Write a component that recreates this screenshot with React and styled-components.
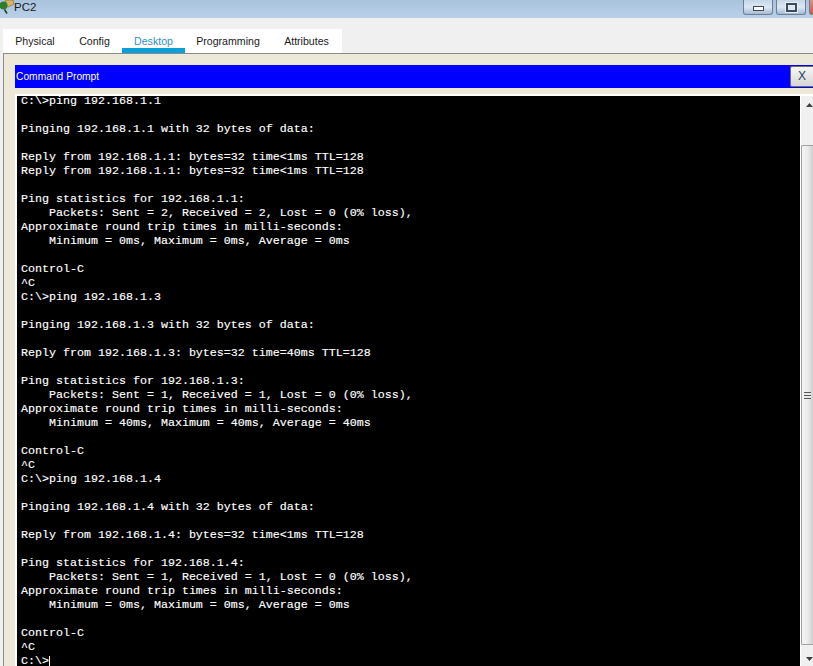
import React from 'react';
import styled, { createGlobalStyle } from 'styled-components';

const LINES = [
  'C:\\>ping 192.168.1.1',
  '',
  'Pinging 192.168.1.1 with 32 bytes of data:',
  '',
  'Reply from 192.168.1.1: bytes=32 time<1ms TTL=128',
  'Reply from 192.168.1.1: bytes=32 time<1ms TTL=128',
  '',
  'Ping statistics for 192.168.1.1:',
  '    Packets: Sent = 2, Received = 2, Lost = 0 (0% loss),',
  'Approximate round trip times in milli-seconds:',
  '    Minimum = 0ms, Maximum = 0ms, Average = 0ms',
  '',
  'Control-C',
  '^C',
  'C:\\>ping 192.168.1.3',
  '',
  'Pinging 192.168.1.3 with 32 bytes of data:',
  '',
  'Reply from 192.168.1.3: bytes=32 time=40ms TTL=128',
  '',
  'Ping statistics for 192.168.1.3:',
  '    Packets: Sent = 1, Received = 1, Lost = 0 (0% loss),',
  'Approximate round trip times in milli-seconds:',
  '    Minimum = 40ms, Maximum = 40ms, Average = 40ms',
  '',
  'Control-C',
  '^C',
  'C:\\>ping 192.168.1.4',
  '',
  'Pinging 192.168.1.4 with 32 bytes of data:',
  '',
  'Reply from 192.168.1.4: bytes=32 time<1ms TTL=128',
  '',
  'Ping statistics for 192.168.1.4:',
  '    Packets: Sent = 1, Received = 1, Lost = 0 (0% loss),',
  'Approximate round trip times in milli-seconds:',
  '    Minimum = 0ms, Maximum = 0ms, Average = 0ms',
  '',
  'Control-C',
  '^C',
];

const TABS = ['Physical', 'Config', 'Desktop', 'Programming', 'Attributes'];

export default function App() {
  return (
    <Wrapper>
      <GlobalStyle />
      <TitleBar>
        <TitleLeft>
          <AppIcon viewBox="0 0 14 14">
            <path d="M6 0h7l1 4-6 3-3-3z" fill="#d9b468" stroke="#8a6a2c" strokeWidth="0.7" />
            <circle cx="3.5" cy="5.5" r="4" fill="#2f7d2a" />
            <path d="M4.5 9.5l2.5 4" stroke="#1c3a1c" strokeWidth="1.5" />
          </AppIcon>
          <TitleText>PC2</TitleText>
        </TitleLeft>
        <WindowButtons>
          <WindowButton>
            <MinGlyph />
          </WindowButton>
          <WindowButton>
            <MaxGlyph />
          </WindowButton>
          <CloseButton />
        </WindowButtons>
      </TitleBar>
      <TabStrip>
        <Tabs>
          {TABS.map((t) => (
            <Tab key={t} $active={t === 'Desktop'}>{t}</Tab>
          ))}
        </Tabs>
      </TabStrip>
      <Panel>
        <PromptBar>
          <PromptTitle>Command Prompt</PromptTitle>
          <CloseX>X</CloseX>
        </PromptBar>
        <Terminal>
          <Output>
            {LINES.map((l, i) => (
              <Line key={i}>{l}</Line>
            ))}
            <LastLine>C:\&gt;<Caret /></LastLine>
          </Output>
          <ScrollBar>
            <UpArrow viewBox="0 0 7 4">
              <path d="M3.5 0L7 4H0z" fill="#404040" />
            </UpArrow>
            <ScrollThumb>
              <Grip />
            </ScrollThumb>
            <DownArrow viewBox="0 0 7 4">
              <path d="M0 0h7L3.5 4z" fill="#404040" />
            </DownArrow>
          </ScrollBar>
        </Terminal>
      </Panel>
    </Wrapper>
  );
}

const GlobalStyle = createGlobalStyle`
  html, body {
    margin: 0;
    padding: 0;
    background: #f0f0f0;
  }
`;

const Wrapper = styled.div`
  width: 813px;
  height: 666px;
  overflow: hidden;
  display: flex;
  flex-direction: column;
  font-family: 'Liberation Sans', Arial, sans-serif;
`;

const TitleBar = styled.div`
  height: 18px;
  flex: none;
  display: flex;
  justify-content: space-between;
  background: linear-gradient(to bottom, #a9c3dd, #b9d1e8);
`;

const TitleLeft = styled.div`
  display: flex;
  align-items: flex-start;
`;

const AppIcon = styled.svg`
  width: 14px;
  height: 14px;
  flex: none;
`;

const TitleText = styled.span`
  font-size: 11.5px;
  line-height: 15px;
  color: #1a1a1a;
`;

const WindowButtons = styled.div`
  display: flex;
  gap: 3px;
  width: 70px;
  height: 15px;
`;

const WindowButton = styled.div`
  width: 30px;
  height: 15px;
  box-sizing: border-box;
  border: 1px solid #6d7f94;
  border-top: none;
  border-radius: 0 0 3px 3px;
  background: linear-gradient(to bottom, #c4d6e8, #dce8f3 50%, #a3bbd3);
  display: flex;
  align-items: center;
  justify-content: center;
`;

const MinGlyph = styled.div`
  width: 11px;
  height: 5px;
  margin-top: 3px;
  box-sizing: border-box;
  border: 1px solid #3d4a5c;
  background: #fff;
`;

const MaxGlyph = styled.div`
  width: 11px;
  height: 9px;
  box-sizing: border-box;
  border: 2px solid #3d4a5c;
  outline: 1px solid #e8eef5;
  background: #dfe8f2;
`;

const CloseButton = styled(WindowButton)`
  width: 4px;
  border-right: none;
  border-radius: 0 0 0 3px;
  background: linear-gradient(to bottom, #d9968a, #c8574a);
`;

const TabStrip = styled.div`
  height: 35px;
  flex: none;
  box-sizing: border-box;
  padding: 11px 0 0 3px;
  background: #f0f0f0;
`;

const Tabs = styled.div`
  display: inline-grid;
  grid-template-columns: 64px 55px 63px 86px 71px;
  height: 24px;
  background: #fff;
`;

const Tab = styled.div`
  box-sizing: border-box;
  height: 24px;
  font-size: 10.6px;
  line-height: 24px;
  text-align: center;
  color: ${(p) => (p.$active ? '#2f8fc4' : '#1a1a1a')};
  border-bottom: ${(p) => (p.$active ? '5px solid #0a9fd6' : 'none')};
`;

const Panel = styled.div`
  flex: 1;
  min-height: 0;
  display: flex;
  flex-direction: column;
  margin-left: 3px;
  box-sizing: border-box;
  padding: 11px 0 0 11px;
  border-top: 1px solid #8c8c8c;
  border-left: 1px solid #8c8c8c;
  background: #ece9d8;
`;

const PromptBar = styled.div`
  height: 23px;
  flex: none;
  display: flex;
  align-items: center;
  justify-content: space-between;
  background: #0000ff;
`;

const PromptTitle = styled.span`
  font-size: 10.25px;
  color: #fff;
  margin-left: 1px;
`;

const CloseX = styled.div`
  width: 23px;
  height: 21px;
  box-sizing: border-box;
  border: 1px solid #6e6e6e;
  border-right: none;
  border-radius: 2px 0 0 2px;
  background: linear-gradient(to bottom, #f6f6f6, #d6d6d6);
  font-size: 12px;
  line-height: 19px;
  text-align: center;
  color: #24405c;
`;

const Terminal = styled.div`
  flex: 1;
  min-height: 0;
  display: flex;
  margin-top: 6px;
  box-sizing: border-box;
  padding: 2px 0 0 2px;
  background: #fff;
`;

const Output = styled.div`
  flex: 1;
  min-width: 0;
  box-sizing: border-box;
  padding: 0 0 0 4px;
  background: #000;
  font-family: 'Liberation Mono', 'Courier New', monospace;
  font-size: 11.67px;
  color: #fff;
  -webkit-text-stroke: 0.15px #fff;
`;

const Line = styled.div`
  height: 14px;
  line-height: 10px;
  white-space: pre;
`;

const LastLine = styled(Line)`
  height: 10px;
`;

const Caret = styled.span`
  display: inline-block;
  width: 1px;
  height: 12px;
  vertical-align: top;
  background: #fff;
`;

const ScrollBar = styled.div`
  width: 12px;
  flex: none;
  margin-left: 1px;
  display: flex;
  flex-direction: column;
  align-items: stretch;
  background: #f0f0f0;
`;

const UpArrow = styled.svg`
  width: 7px;
  height: 4px;
  flex: none;
  margin: 7px 0 38px 5px;
`;

const DownArrow = styled.svg`
  width: 7px;
  height: 4px;
  flex: none;
  margin: 12px 0 0 5px;
`;

const ScrollThumb = styled.div`
  height: 500px;
  flex: none;
  box-sizing: border-box;
  border: 1px solid #a0a0a0;
  border-right: none;
  border-radius: 2px 0 0 2px;
  background: linear-gradient(to right, #f4f4f4, #ececec 50%, #cfcfcf);
  display: flex;
  align-items: center;
  justify-content: center;
`;

const Grip = styled.div`
  width: 7px;
  height: 7px;
  background: repeating-linear-gradient(to bottom, #555 0, #555 1px, #e8e8e8 1px, #e8e8e8 3px);
`;
